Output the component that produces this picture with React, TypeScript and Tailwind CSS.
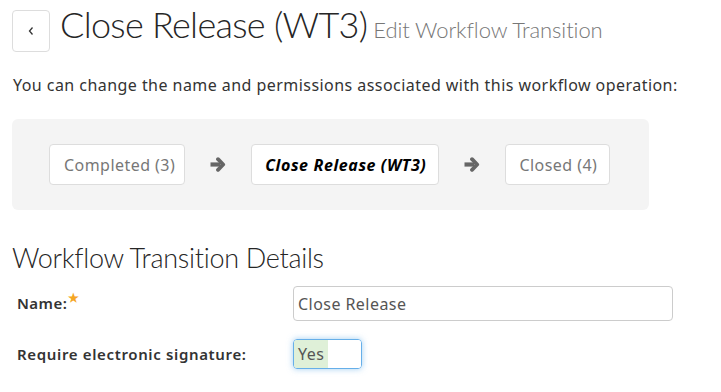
import React from "react";

function Arrow() {
  return (
    <svg width="16" height="15" viewBox="0 0 16 15" className="text-[#666]">
      <path d="M0.5 7.5h10" stroke="currentColor" strokeWidth="4.2" />
      <path d="M8 2.2l5.2 5.3L8 12.8" fill="none" stroke="currentColor" strokeWidth="3.8" strokeLinejoin="round" strokeLinecap="round" />
    </svg>
  );
}

export default function App() {
  return (
    <div className="w-[721px] h-[392px] bg-white text-[#333] overflow-hidden tracking-[0.45px]" style={{ fontFamily: "'Noto Sans', sans-serif" }}>
      <div className="flex items-start pl-[12px] pt-[10px]">
        <button className="w-[38px] h-[42px] border border-[#ddd] rounded-[4px] flex items-center justify-center text-[#333]">
          <svg width="8" height="10" viewBox="0 0 8 10"><path d="M5.5 1.5L2.5 5l3 3.5" fill="none" stroke="#333" strokeWidth="1.3" /></svg>
        </button>
        <h1 className="ml-[10px] -mt-[4px] text-[36px] leading-[36px] font-light text-[#262626] tracking-[-0.7px] whitespace-nowrap" style={{ fontFamily: "Lato, sans-serif" }}>
          Close Release (WT3)
          <span className="ml-[6px] text-[22px] text-[#777] tracking-[-0.1px]">Edit Workflow Transition</span>
        </h1>
      </div>
      <p className="ml-[13px] mt-[22px] text-[16px] leading-[22px] text-[#333] whitespace-nowrap">
        You can change the name and permissions associated with this workflow operation:
      </p>
      <div className="mx-[12px] mt-[23px] w-[637px] h-[91px] bg-[#f4f4f4] rounded-[6px] flex items-center pl-[37px] gap-[25px]">
        <div className="h-[41px] pl-[14px] pr-[9px] flex items-center bg-white border border-[#ddd] rounded-[4px] text-[16px] text-[#777]">Completed (3)</div>
        <Arrow />
        <div className="h-[41px] pl-[13px] pr-[12px] flex items-center bg-white border border-[#ddd] rounded-[4px] text-[16px] text-black italic font-bold tracking-[0.6px]">Close Release (WT3)</div>
        <Arrow />
        <div className="h-[41px] pl-[13px] pr-[12px] flex items-center bg-white border border-[#ddd] rounded-[4px] text-[16px] text-[#777]">Closed (4)</div>
      </div>
      <h2 className="ml-[12px] mt-[31px] text-[27px] leading-[34px] font-light text-[#262626] tracking-[-0.3px]" style={{ fontFamily: "Lato, sans-serif" }}>
        Workflow Transition Details
      </h2>
      <div className="flex items-center mt-[11px]">
        <label className="w-[293px] pl-[17px] text-[15px] font-semibold text-[#333] tracking-[0.45px] relative">
          Name:<span className="absolute text-[#f5a623] text-[12px] -top-[3px] ml-[1px]">★</span>
        </label>
        <div className="w-[380px] h-[35px] border border-[#ccc] rounded-[4px] flex items-center px-[4px] text-[16px] text-[#555]">Close Release</div>
      </div>
      <div className="flex items-center mt-[18px]">
        <label className="w-[293px] pl-[17px] text-[15px] font-semibold text-[#333] tracking-[0.65px]">Require electronic signature:</label>
        <div className="w-[69px] h-[30px] border border-[#66afe9] rounded-[4px] flex overflow-hidden shadow-[0_0_6px_rgba(102,175,233,0.6)]">
          <div className="w-[34px] bg-[#dff0d8] flex items-center pl-[4px] text-[16px] text-[#555]">Yes</div>
          <div className="flex-1 bg-white" />
        </div>
      </div>
    </div>
  );
}
